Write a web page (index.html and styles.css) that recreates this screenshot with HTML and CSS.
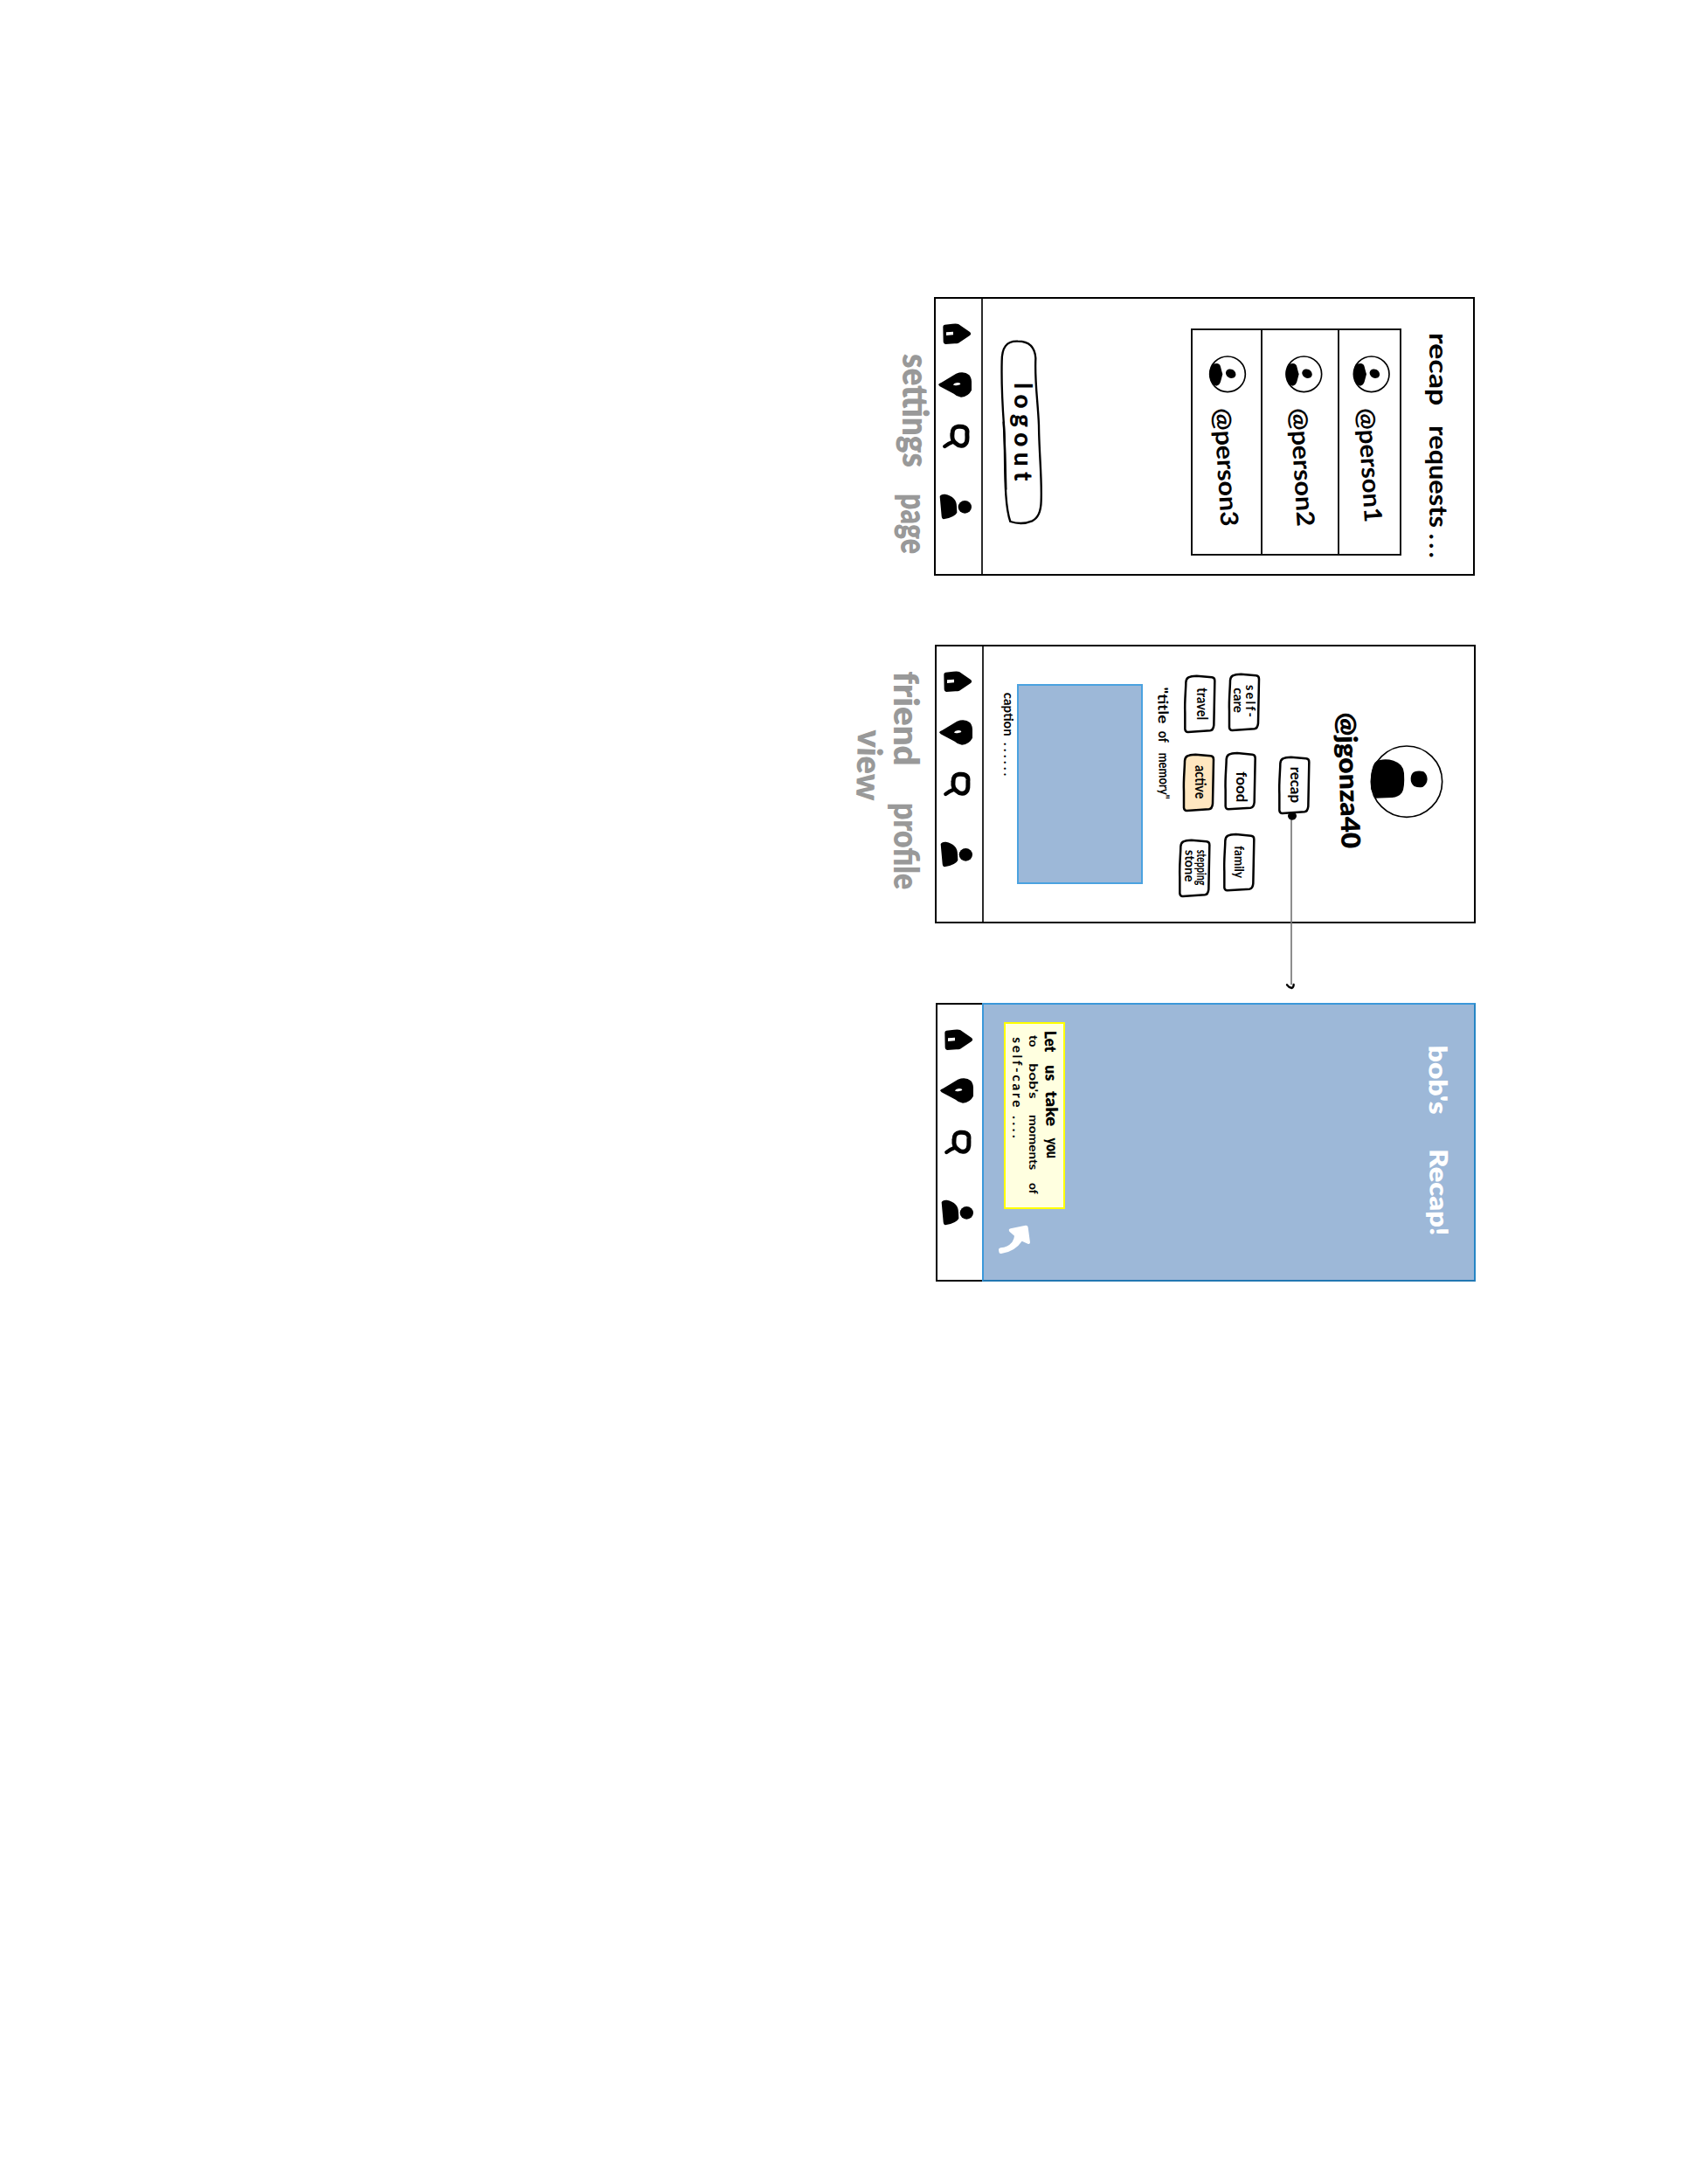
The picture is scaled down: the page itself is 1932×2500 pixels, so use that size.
FILE: index.html
```html
<!DOCTYPE html>
<html lang="en">
<head>
<meta charset="utf-8">
<title>Recap wireframes</title>
<link rel="stylesheet" href="styles.css">
</head>
<body>
<svg class="defs" width="0" height="0" aria-hidden="true">
  <defs>
    <g id="nav-icons">
      <path fill-rule="evenodd" d="M298 162Q298 156 304 155L330 152Q345 150 351 153L390 180Q397 187 390 192L351 218Q346 220 338 220L306 222Q300 222 299 214ZM309 181L309 192L333 190L333 179Z"/>
      <path fill-rule="evenodd" d="M282 361Q284 357 292 354L343 323Q370 312 388 328Q397 338 396 360L396 380Q385 402 360 404Q345 402 335 392L287 367ZM333 361Q334 364 345 364Q358 362 358 358Q356 354 347 354Q336 355 333 361Z"/>
      <path class="pen ring" d="M350 505C366 503 382 508 381 524C379 536 384 546 378 560C370 574 354 574 344 564C332 556 328 548 330 530C330 514 336 507 350 505Z"/>
      <path class="pen ring handle" d="M332 557L319 563L304 573"/>
      <path d="M287 745Q290 736 305 737Q345 745 345 780L346 800Q340 815 300 823Q294 822 293 812Z"/>
      <ellipse cx="373" cy="781" rx="23" ry="22"/>
    </g>
    <g id="avatar">
      <circle class="pen thin" r="61"/>
      <path d="M-49 -35Q-28 -42 -24 -26Q-20 -10 -17 0Q-20 12 -24 26Q-28 38 -38 40Q-52 38 -58 20Q-63 8 -62 -8Q-58 -26 -49 -35Z"/>
      <ellipse cx="11" cy="-2" rx="18" ry="15" transform="rotate(30 11 -2)"/>
    </g>
    <path id="chip" d="M7 25C8 8 18 4 44 3L96 8Q106 9 106 20L103 172Q101 190 90 191L14 196Q5 196 4 186L4 130C2 90 7 50 7 25Z"/>
  </defs>
</svg>

<main class="board">
  <section class="row settings">
    <svg class="note-label" width="79" height="319" viewBox="30 60 237 957">
      <text class="w-heavy" font-size="122" transform="translate(158 0) rotate(90)"><tspan x="255" textLength="390" lengthAdjust="spacingAndGlyphs">settings</tspan> <tspan x="735" dy="6" textLength="207" lengthAdjust="spacingAndGlyphs">page</tspan></text>
    </svg>
    <div class="phone">
      <svg class="nav" width="54" height="315" viewBox="273 66 162 945"><use href="#nav-icons"/><path class="pen rule" d="M432 64V1013"/></svg>
      <svg class="logout" width="60" height="315" viewBox="480 66 180 945">
        <path class="pen mid" d="M555 212C515 210 500 235 500 280C498 360 502 430 507 500C512 580 508 650 514 740Q518 800 529 831Q568 844 604 829Q634 815 635 760C638 680 628 600 627 500C624 420 612 350 616 270Q612 212 555 212Z"/>
        <path class="pen mid" d="M506 490Q509 540 511 600L514 720"/>
        <text class="w-black" font-size="84" transform="translate(542 0) rotate(90)" x="354" textLength="356" letter-spacing="18">logout</text>
      </svg>
      <div class="requests">
        <svg class="request" width="78" height="256" viewBox="105 174 234 768"><use href="#avatar" x="225" y="325"/><text class="w-bold" font-size="84" transform="translate(178 443) rotate(86.5)" textLength="407" lengthAdjust="spacingAndGlyphs">@person3</text></svg>
        <svg class="request" width="86" height="256" viewBox="345 174 258 768"><use href="#avatar" x="487" y="325"/><text class="w-bold" font-size="84" transform="translate(440 443) rotate(86.5)" textLength="407" lengthAdjust="spacingAndGlyphs">@person2</text></svg>
        <svg class="request" width="69" height="256" viewBox="609 174 207 768"><use href="#avatar" x="719" y="325"/><text class="w-bold" font-size="84" transform="translate(672 443) rotate(86.5)" textLength="393" lengthAdjust="spacingAndGlyphs">@person1</text></svg>
      </div>
      <svg width="82" height="315" viewBox="822 66 246 945">
        <text class="w-bold" font-size="88" transform="translate(919 0) rotate(90)"><tspan x="183" textLength="250" lengthAdjust="spacingAndGlyphs">recap</tspan> <tspan x="502" textLength="350" lengthAdjust="spacingAndGlyphs">requests</tspan><tspan x="872" textLength="84">...</tspan></text>
      </svg>
    </div>
  </section>

  <section class="row friend">
    <svg class="note-label" width="100" height="319" viewBox="30 54 300 957">
      <text class="w-heavy" font-size="118" transform="translate(190 0) rotate(90)"><tspan x="145" textLength="325" lengthAdjust="spacingAndGlyphs">friend</tspan> <tspan x="597" textLength="298" lengthAdjust="spacingAndGlyphs">profile</tspan></text>
      <text class="w-heavy" font-size="118" transform="translate(66 345) rotate(91.5)" textLength="243" lengthAdjust="spacingAndGlyphs">view</text>
    </svg>
    <div class="phone">
      <svg class="nav" width="54" height="315" viewBox="273 66 162 945"><use href="#nav-icons"/><path class="pen rule" d="M432 64V1013"/></svg>
      <svg width="38" height="315" viewBox="498 60 114 945">
        <text class="w-bold" font-size="44" transform="translate(568 0) rotate(90)"><tspan x="218" textLength="150" lengthAdjust="spacingAndGlyphs">caption</tspan> <tspan x="390" textLength="115">......</tspan></text>
      </svg>
      <div class="photo"></div>
      <svg width="39" height="315" viewBox="1044 60 117 945">
        <text class="w-bold" font-size="48" transform="translate(1093 0) rotate(89.2)"><tspan x="200" textLength="125" lengthAdjust="spacingAndGlyphs">"title</tspan> <tspan x="350" textLength="40" lengthAdjust="spacingAndGlyphs">of</tspan> <tspan x="425" textLength="160" lengthAdjust="spacingAndGlyphs">memory"</tspan></text>
      </svg>
      <div class="chips chips-lower">
        <svg class="chip travel" width="40" height="70" viewBox="72 153 120 210"><use href="#chip" x="75" y="158"/><text class="w-bold" font-size="50" transform="translate(121 202) rotate(90)" textLength="110" lengthAdjust="spacingAndGlyphs">travel</text></svg>
        <svg class="chip active" width="40" height="70" viewBox="66 423 120 210"><use href="#chip" x="71" y="428"/><text class="w-bold" font-size="50" transform="translate(114 468) rotate(90)" textLength="115" lengthAdjust="spacingAndGlyphs">active</text></svg>
        <svg class="chip stone" width="40" height="70" viewBox="51 717 120 210"><use href="#chip" x="57" y="722"/><text class="w-bold" font-size="43" transform="translate(121 758) rotate(90)" textLength="122" lengthAdjust="spacingAndGlyphs">stepping</text><text class="w-bold" font-size="46" transform="translate(80 758) rotate(91)" textLength="110" lengthAdjust="spacingAndGlyphs">stone</text></svg>
      </div>
      <div class="chips chips-upper">
        <svg class="chip self" width="40" height="70" viewBox="222 147 120 210"><use href="#chip" x="227" y="152"/><text class="w-bold" font-size="44" transform="translate(288 192) rotate(90)" textLength="111" lengthAdjust="spacing">self-</text><text class="w-bold" font-size="48" transform="translate(247 202) rotate(90)" textLength="86" lengthAdjust="spacingAndGlyphs">care</text></svg>
        <svg class="chip food" width="40" height="70" viewBox="210 420 120 210"><use href="#chip" x="214" y="423"/><text class="w-bold" font-size="52" transform="translate(255 490) rotate(90)" textLength="105" lengthAdjust="spacingAndGlyphs">food</text></svg>
        <svg class="chip family" width="40" height="70" viewBox="204 696 120 210"><use href="#chip" x="210" y="702"/><text class="w-bold" font-size="46" transform="translate(248 745) rotate(90)" textLength="110" lengthAdjust="spacingAndGlyphs">family</text></svg>
      </div>
      <svg class="chip recap" width="40" height="70" viewBox="393 432 120 210"><use href="#chip" x="399" y="437"/><text class="w-bold" font-size="50" transform="translate(440 473) rotate(90)" textLength="124" lengthAdjust="spacingAndGlyphs">recap</text></svg>
      <svg width="62" height="315" viewBox="513 60 186 945">
        <text class="w-heavy" font-size="90" transform="translate(603 287) rotate(88.3)" textLength="468" lengthAdjust="spacingAndGlyphs">@jgonza40</text>
      </svg>
      <svg width="97" height="315" viewBox="699 60 291 945">
        <circle class="pen thin" cx="840" cy="524" r="122"/>
        <path d="M748 450Q770 445 795 452Q830 464 831 495Q834 545 824 562Q812 578 790 579L732 581Q727 580 728 567Q716 555 717 535Q716 480 730 460Q738 450 748 450Z"/>
        <path d="M868 490Q882 485 898 490Q911 500 911 516Q910 532 896 542Q882 546 866 540Q853 530 854 512Q856 494 868 490Z"/>
      </svg>
      <svg class="connector" width="24" height="212" viewBox="408 615 72 636">
        <path class="wire" d="M444 650V1222"/>
        <ellipse cx="447" cy="642" rx="15" ry="14"/>
        <path class="pen mid" d="M429 1222Q434 1230 446 1233Q452 1230 452 1221"/>
      </svg>
    </div>
  </section>

  <section class="row recap-screen">
    <svg class="nav nav-framed" width="51" height="315" viewBox="273 66 153 945"><use href="#nav-icons"/></svg>
    <div class="story">
      <div class="story-foot">
        <div class="sticky">
          <svg width="66" height="210" viewBox="333 126 198 630">
            <text class="w-heavy" font-size="56" transform="translate(464 0) rotate(89)"><tspan x="150" textLength="73" lengthAdjust="spacingAndGlyphs">Let</tspan> <tspan x="268" textLength="54" lengthAdjust="spacingAndGlyphs">us</tspan> <tspan x="357" textLength="121" lengthAdjust="spacingAndGlyphs">take</tspan> <tspan x="518" textLength="70" lengthAdjust="spacingAndGlyphs">you</tspan></text>
            <text class="w-bold" font-size="42" transform="translate(413 0) rotate(90)"><tspan x="165" textLength="41" lengthAdjust="spacingAndGlyphs">to</tspan> <tspan x="262" textLength="121" lengthAdjust="spacingAndGlyphs">bob's</tspan> <tspan x="438" textLength="190" lengthAdjust="spacingAndGlyphs">moments</tspan> <tspan x="672" textLength="38" lengthAdjust="spacingAndGlyphs">of</tspan></text>
            <text class="w-bold" font-size="46" transform="translate(356 0) rotate(90)"><tspan x="172" textLength="240" lengthAdjust="spacing">self-care</tspan> <tspan x="442" textLength="76">....</tspan></text>
          </svg>
        </div>
        <svg class="arrow" width="42" height="38" viewBox="300 810 126 114"><path d="M309 901Q309 896 316 895Q340 893 355 876Q363 862 363 854L346 839Q341 832 350 829L401 818Q409 817 410 825L417 877Q416 884 409 881L389 872Q365 908 318 915Q310 916 310 908Z"/></svg>
      </div>
      <svg class="story-title" width="77" height="315" viewBox="480 150 231 945">
        <text class="w-heavy" font-size="86" transform="translate(554 0) rotate(89.6)"><tspan x="290" textLength="237" lengthAdjust="spacingAndGlyphs">bob's</tspan> <tspan x="646" textLength="298" lengthAdjust="spacingAndGlyphs">Recap!</tspan></text>
      </svg>
    </div>
  </section>
</main>
</body>
</html>
```
FILE: styles.css
```css
* { box-sizing: border-box; }

body {
  margin: 0;
  background: #fff;
  font-family: Lato, "Open Sans", sans-serif;
}

svg {
  display: block;
  flex: none;
  overflow: visible;
}

.defs { height: 0; }

/* handwriting weights */
.w-bold { font-weight: 700; }
.w-heavy { font-weight: 800; }
.w-black { font-weight: 900; }

.pen {
  fill: none;
  stroke: #000;
  stroke-linecap: round;
  stroke-linejoin: round;
}
.thin { stroke-width: 5; }
.rule { stroke-width: 5; stroke-linecap: butt; }
.mid { stroke-width: 7; }
.ring { stroke-width: 15; }
.handle { stroke-width: 13; }

.board {
  display: flex;
  flex-direction: column;
  width: 1932px;
  height: 2500px;
  padding-top: 340px;
}

.row {
  display: flex;
  align-items: flex-start;
  height: 319px;
}
.settings { margin-left: 990px; }
.friend { margin: 79px 0 0 970px; }
.recap-screen { margin: 91px 0 0 1071px; }

.note-label { fill: #999; }

.phone {
  position: relative;
  display: flex;
  align-items: flex-start;
  width: 619px;
  height: 319px;
  border: 2px solid #000;
}

/* settings screen */
.logout { margin-left: 15px; }

.requests {
  display: flex;
  height: 260px;
  margin: 34px 0 0 163px;
  border: solid #111;
  border-width: 2px 2px 2px 0;
}
.request {
  box-sizing: content-box;
  border-left: 2px solid #111;
}

/* friend profile screen */
.photo {
  flex: none;
  width: 144px;
  height: 229px;
  margin-top: 43px;
  background: #9db8d8;
  border: 2px solid #4aa2e0;
}

.chips { flex: none; }
.chips-lower { width: 47px; }
.chips-upper { width: 46px; margin-left: 4px; }
.chip use {
  fill: #fff;
  stroke: #000;
  stroke-width: 7.5;
  stroke-linejoin: round;
}
.active use { fill: #ffe7c0; }
.travel { margin: 31px 0 0 7px; }
.active { margin: 20px 0 0 5px; }
.stone { margin-top: 28px; }
.self { margin: 29px 0 0 6px; }
.food { margin: 21px 0 0 2px; }
.family { margin-top: 22px; }
.recap { margin: 124px 0 0 17px; }

.connector {
  position: absolute;
  left: 394px;
  top: 185px;
}
.wire {
  stroke: #777;
  stroke-width: 5;
}

/* recap screen */
.nav-framed {
  box-sizing: content-box;
  border: solid #000;
  border-width: 2px 0 2px 2px;
}
.story {
  display: flex;
  justify-content: space-between;
  width: 565px;
  height: 319px;
  background: #9db8d8;
  border: 2px solid #3b98da;
  border-right-color: #2585c4;
  border-bottom-color: #2277b2;
}
.story-foot { margin: 20px 0 0 14px; }
.sticky {
  width: 70px;
  height: 214px;
  margin-left: 9px;
  background: #ffffe0;
  border: 2px solid #ff0;
}
.arrow {
  margin-top: 16px;
  fill: #fff;
}
.story-title { fill: #fff; }
```
